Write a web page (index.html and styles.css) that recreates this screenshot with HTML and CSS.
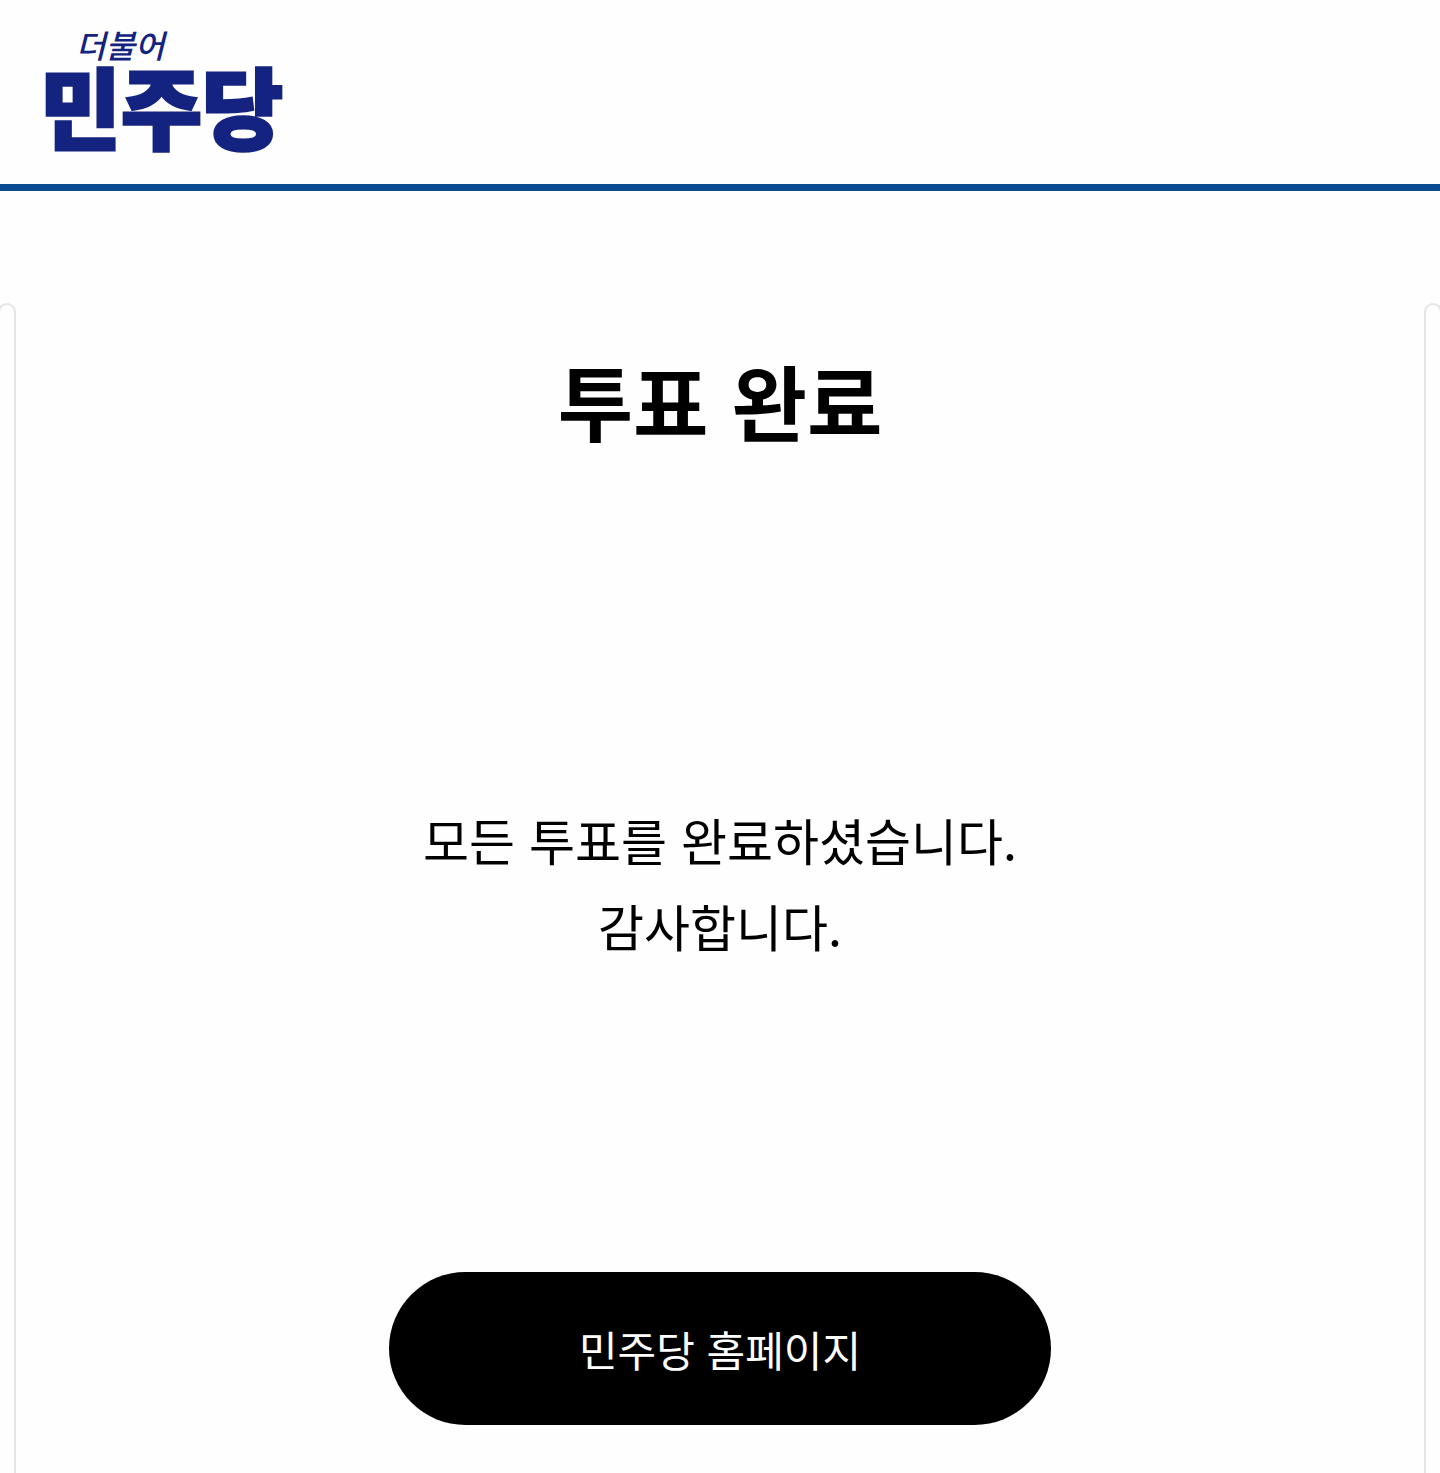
FILE: index.html
```html
<!DOCTYPE html>
<html lang="ko">
<head>
  <meta charset="UTF-8">
  <meta name="viewport" content="width=device-width, initial-scale=1.0">
  <title>투표 완료</title>
  <link rel="stylesheet" href="styles.css">
</head>
<body>
  <header class="header">
    <a class="logo" href="#">
      <span class="logo-sub">더불어</span>
      <span class="logo-main">민주당</span>
    </a>
  </header>

  <main class="slides">
    <div class="slide-edge slide-edge-left"></div>
    <section class="result">
      <h1>투표 완료</h1>
      <p class="message">모든 투표를 완료하셨습니다.<br>감사합니다.</p>
      <button class="button" type="button">민주당 홈페이지</button>
    </section>
    <div class="slide-edge slide-edge-right"></div>
  </main>
</body>
</html>
```

FILE: styles.css
```css
* {
  box-sizing: border-box;
}
body {
  display: flex;
  flex-direction: column;
  min-height: 100vh;
  margin: 0;
  background-color: #fefefe;
  color: #000;
  font-family: "Noto Sans CJK KR", sans-serif;
  overflow-x: hidden;
}
.header {
  padding: 24px 40px 40px;
  border-bottom: 7px solid #0a4c90;
}
.logo {
  display: flex;
  flex-direction: column;
  width: max-content;
  color: #14237f;
  text-decoration: none;
}
.logo-sub {
  padding-left: 36px;
  font-size: 32px;
  font-style: italic;
  font-weight: 500;
  line-height: 40px;
}
.logo-main {
  font-size: 88px;
  font-weight: 900;
  line-height: 80px;
  -webkit-text-stroke: 3px #14237f;
}

/* neighbouring slides peek in at both sides */
.slides {
  display: flex;
  flex: 1;
  padding-top: 112px;
}
.slide-edge {
  flex: 0 0 18px;
  border: 2px solid #e4e4e4;
  border-bottom: none;
  border-radius: 9px 9px 0 0;
}
.slide-edge-left {
  margin-left: -2px;
}
.slide-edge-right {
  margin-right: -2px;
}
.result {
  display: flex;
  flex: 1;
  flex-direction: column;
  align-items: center;
  padding: 37px 0 48px;
  text-align: center;
}
h1 {
  margin: 0;
  font-size: 82px;
  font-weight: 700;
  line-height: 120px;
}
.message {
  margin: 336px 0 304px;
  font-size: 50px;
  line-height: 86px;
}
.button {
  width: 47%;
  padding: 44px 20px;
  border: none;
  border-radius: 77px;
  background-color: #000;
  color: #fff;
  font-family: inherit;
  font-size: 42px;
  line-height: 65px;
  cursor: pointer;
}
```
